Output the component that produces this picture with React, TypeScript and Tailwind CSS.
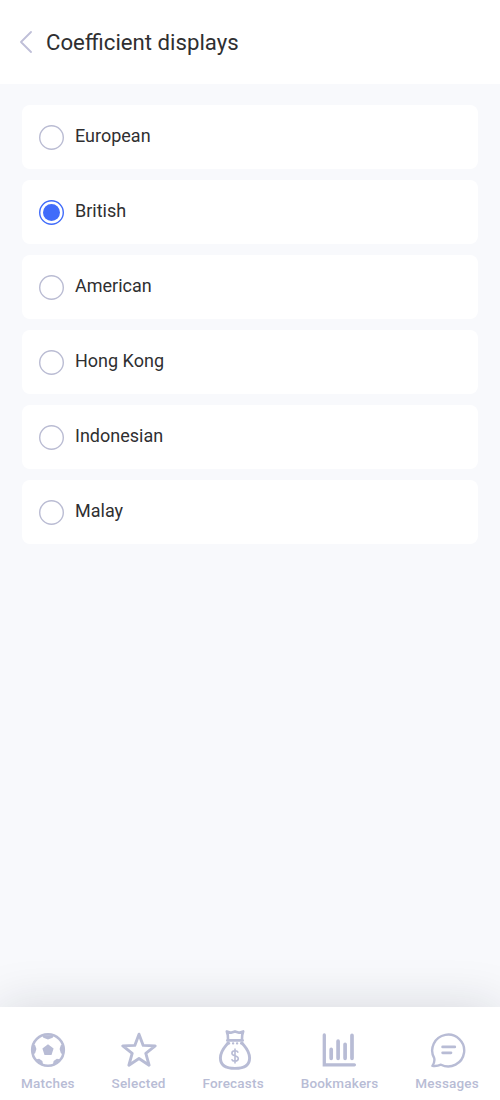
import { useState } from 'react';
import type { ReactNode } from 'react';

const formats = ['European', 'British', 'American', 'Hong Kong', 'Indonesian', 'Malay'];

function Radio({ checked }: { checked: boolean }) {
  return (
    <svg className={`w-[25px] h-[25px] ${checked ? 'text-[#416cfa]' : 'text-[#babcd3]'}`} viewBox="0 0 25 25" fill="none">
      <circle cx="12.5" cy="12.5" r="11.8" stroke="currentColor" strokeWidth="1.4" />
      {checked && <circle cx="12.5" cy="12.5" r="8.5" fill="currentColor" />}
    </svg>
  );
}

function BallIcon() {
  return (
    <svg className="w-9 h-9" viewBox="0 0 36 36" fill="none">
      <circle cx="18" cy="18" r="15.8" stroke="currentColor" strokeWidth="2.6" />
      <path
        fill="currentColor"
        d="M18 12.2l5.6 4.2-2.1 6.6h-7l-2.1-6.6zM11.8 3.2h12.4l-1.6 2.6L18 7.4l-4.6-1.6zM1.9 13.3l3.2-.3 1.3 3.9-1.2 4-2.6 2.3zM34.1 13.3l-3.2-.3-1.3 3.9 1.2 4 2.6 2.3zM5.4 27.6l3.7-.9 3.3 2.2.8 4.3zM30.6 27.6l-3.7-.9-3.3 2.2-.8 4.3z"
      />
    </svg>
  );
}

function StarIcon() {
  return (
    <svg className="w-9 h-9" viewBox="0 0 36 36" fill="none">
      <path
        d="M18 2.2l4.2 11.2 12 .5-9.4 7.5 3.3 11.8L18 26.5 7.9 33.2l3.3-11.8-9.4-7.5 12-.5z"
        stroke="currentColor"
        strokeWidth="2.9"
        strokeLinejoin="round"
      />
    </svg>
  );
}

function BagIcon() {
  return (
    <svg className="ml-1 w-9 h-[42px]" viewBox="0 0 36 42" fill="none">
      <g stroke="currentColor" strokeWidth="2.6" strokeLinecap="round" strokeLinejoin="round">
        <path d="M11 9.8L10.8 6.2 9.8 2.4l4 1.4 4.2-1.4 4.2 1.4 4-1.4-1 3.8-.2 3.6" />
        <path d="M10.4 11.4h15.2" strokeWidth="2.8" />
        <path d="M11 14C7.5 18.4 3.4 21.8 3.4 29c0 7.3 4.6 10.4 14.6 10.4S32.6 36.3 32.6 29c0-7.2-4.1-10.6-7.6-15" strokeWidth="2.9" />
        <path d="M11.2 14.4h1M16 14.4h.2M20 14.4h.2M24 14.4h.8" strokeWidth="2.2" />
      </g>
      <path
        d="M21.2 23.6c-.5-1.2-1.6-1.8-3.2-1.8-1.9 0-3.1 1-3.1 2.4 0 3.5 6.4 1.8 6.4 5.4 0 1.6-1.4 2.6-3.3 2.6-1.7 0-2.9-.7-3.4-2M18 19.6v14.8"
        stroke="currentColor"
        strokeWidth="1.6"
      />
    </svg>
  );
}

function ChartIcon() {
  return (
    <svg className="mr-px w-9 h-9" viewBox="0 0 36 36" fill="none" stroke="currentColor" strokeWidth="3.7" strokeLinecap="round">
      <path d="M3.3 2.9v29.9h30.1" strokeWidth="3.3" />
      <path d="M10.2 17.4v8.9M17.1 9.2v17.1M24.1 12.3v14M31 3.4v22.9" />
    </svg>
  );
}

function MessageIcon() {
  return (
    <svg className="ml-px w-9 h-9" viewBox="0 0 36 36" fill="none" stroke="currentColor" strokeWidth="2.4" strokeLinecap="round" strokeLinejoin="round">
      <path d="M4.2 26.2A16 15.9 0 1 1 11 32.7C8.3 33.9 5.2 34.3 2.4 33.9 4 31.6 4.9 29.2 4.2 26.2z" />
      <path d="M12.6 14.9h12.2M12.6 20.8h8.4" strokeWidth="2.7" />
    </svg>
  );
}

const tabs: { label: string; icon: ReactNode }[] = [
  { label: 'Matches', icon: <BallIcon /> },
  { label: 'Selected', icon: <StarIcon /> },
  { label: 'Forecasts', icon: <BagIcon /> },
  { label: 'Bookmakers', icon: <ChartIcon /> },
  { label: 'Messages', icon: <MessageIcon /> }
];

export default function App() {
  const [selected, setSelected] = useState('British');

  return (
    <div className="flex flex-col h-[1100px] overflow-hidden bg-[#f8f9fc] font-['Roboto',sans-serif] text-[#2f2f31]">
      {/* Header */}
      <header className="flex items-center h-[84px] shrink-0 bg-white pl-5">
        <button aria-label="Back" className="text-[#bfbfd8]">
          <svg className="w-3 h-[22px]" viewBox="0 0 12 22" fill="none">
            <path d="M11 1L1 11l10 10" stroke="currentColor" strokeWidth="1.8" strokeLinecap="round" strokeLinejoin="round" />
          </svg>
        </button>
        <h1 className="ml-3.5 text-[22.2px] leading-7">Coefficient displays</h1>
      </header>

      {/* Format list */}
      <main className="flex flex-col flex-1 gap-[11px] px-[22px] pt-[21.4px]">
        {formats.map((format) => (
          <button
            key={format}
            onClick={() => setSelected(format)}
            className="flex items-center h-16 shrink-0 rounded-lg bg-white pl-[17px] text-left"
          >
            <Radio checked={selected === format} />
            <span className="ml-[11px] pb-0.5 text-lg leading-6">{format}</span>
          </button>
        ))}
      </main>

      {/* Bottom navigation */}
      <nav className="flex justify-between h-[93px] shrink-0 bg-white px-[21px] pt-[21px] text-[#b8bcd5] shadow-[0_0_50px_rgba(20,25,40,0.15)]">
        {tabs.map((tab) => (
          <button key={tab.label} className="flex flex-col items-center">
            <span className="flex items-center justify-center h-[43px]">{tab.icon}</span>
            <span className="mt-1 text-[13.5px] leading-4 font-medium tracking-[0.2px]">{tab.label}</span>
          </button>
        ))}
      </nav>
    </div>
  );
}
